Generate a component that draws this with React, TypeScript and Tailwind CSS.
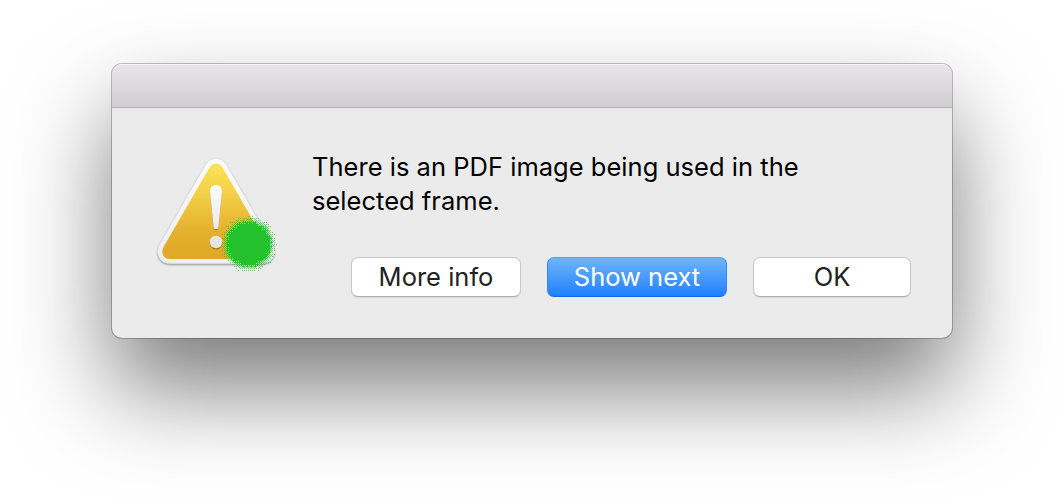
import { clsx } from "clsx";

const bayer = [
  [0, 8, 2, 10],
  [12, 4, 14, 6],
  [3, 11, 1, 9],
  [15, 7, 13, 5],
];

// round spot that breaks up into single pixels towards its rim
function ditheredDot(cx: number, cy: number, solid: number, rim: number) {
  let core = "";
  let edge = "";
  for (let y = Math.floor(cy - rim); y < cy + rim; y++) {
    for (let x = Math.floor(cx - rim); x < cx + rim; x++) {
      const dist = Math.hypot(x + 0.5 - cx, y + 0.5 - cy);
      const level = Math.min(1, Math.max(0, (rim - dist) / (rim - solid)));
      if (Math.pow(level, 1.15) > (bayer[y & 3][x & 3] + 0.5) / 16) {
        if (dist > 23.5) edge += `M${x} ${y}h1v1h-1z`;
        else core += `M${x} ${y}h1v1h-1z`;
      }
    }
  }
  return { core, edge };
}

const dot = ditheredDot(98.8, 94, 19.5, 29);

const triangle =
  "M59.5 17.5C62.5 12.3 69.5 12.3 72.5 17.5L118.5 97C121.5 103 118.5 109 112.5 109H19.5C13.5 109 10.5 103 13.5 97Z";

const mark =
  "M66 35C69.6 35 72.3 37.5 72 41.5L68.4 77C68.2 80 63.8 80 63.6 77L60 41.5C59.7 37.5 62.4 35 66 35Z";

function WarningIcon() {
  return (
    <svg width="132" height="126" viewBox="0 0 132 126" className="shrink-0">
      <defs>
        <linearGradient id="fill" x1="0" y1="13" x2="0" y2="109" gradientUnits="userSpaceOnUse">
          <stop offset="0" stopColor="#fde455" />
          <stop offset="0.3" stopColor="#f3d148" />
          <stop offset="0.7" stopColor="#e5b12f" />
          <stop offset="1" stopColor="#dfa726" />
        </linearGradient>
        <linearGradient id="rim" x1="0" y1="8" x2="0" y2="114" gradientUnits="userSpaceOnUse">
          <stop offset="0" stopColor="#fcfcfc" />
          <stop offset="1" stopColor="#ededed" />
        </linearGradient>
        <linearGradient id="mark" x1="0" y1="35" x2="0" y2="98" gradientUnits="userSpaceOnUse">
          <stop offset="0" stopColor="#fafafa" />
          <stop offset="1" stopColor="#e3e3e3" />
        </linearGradient>
        <filter id="drop" x="-20%" y="-20%" width="140%" height="140%">
          <feDropShadow dx="0" dy="1" stdDeviation="1.2" floodColor="#000" floodOpacity="0.5" />
        </filter>
        <filter id="markDrop" x="-50%" y="-20%" width="200%" height="140%">
          <feDropShadow dx="0" dy="1.2" stdDeviation="0.7" floodColor="#7a5000" floodOpacity="0.65" />
        </filter>
      </defs>
      <g filter="url(#drop)">
        <path d={triangle} fill="url(#rim)" stroke="url(#rim)" strokeWidth="9" strokeLinejoin="round" />
      </g>
      <path d={triangle} fill="url(#fill)" />
      <g filter="url(#markDrop)" fill="url(#mark)">
        <path d={mark} />
        <circle cx="66" cy="92" r="6.2" />
      </g>
      <g fill="#25c02e" shapeRendering="crispEdges">
        <path d={dot.core} />
        <path d={dot.edge} fillOpacity="0.7" />
      </g>
    </svg>
  );
}

const buttons = [
  { label: "More info", width: "w-[170px]", primary: false },
  { label: "Show next", width: "w-[180px]", primary: true },
  { label: "OK", width: "w-[158px]", primary: false },
];

export default function App() {
  return (
    <div className="h-[498px] w-[1064px] overflow-hidden bg-white px-[112px] pt-16 font-['Inter',sans-serif]">
      <div className="h-[274px] w-[840px] overflow-hidden rounded-[10px] bg-[#ebebeb] shadow-[0_0_0_1px_rgba(0,0,0,0.24),0_50px_96px_rgba(0,0,0,0.52)]">
        <div className="h-11 border-b-[1px] border-[#b2b0b2] bg-linear-to-b from-[#e8e6e9] to-[#d0ced1] shadow-[inset_0_1px_0_#f6f5f6]" />
        <div className="flex pl-[38px] pt-[42px]">
          <WarningIcon />
          <div className="ml-[30px] flex flex-col">
            <p className="text-[25.5px] leading-[34px] tracking-[0.02px] text-black">
              There is an PDF image being used in the
              <br />
              selected frame.
            </p>
            <div className="ml-[39px] mt-[39px] flex gap-[26px]">
              {buttons.map((button) => (
                <button
                  key={button.label}
                  className={clsx(
                    "h-10 rounded-[7px] text-[25.5px] leading-[38px]",
                    button.width,
                    button.primary
                      ? "border border-t-[#4da0f5] border-x-[#2f86f5] border-b-[#0f66f0] bg-linear-to-b from-[#6eb4f8] to-[#1a80fe] text-white"
                      : "border border-[#c8c8c8] border-b-[#b0b0b0] bg-white text-[#222222] shadow-[0_1px_1px_rgba(0,0,0,0.08)]",
                  )}
                >
                  {button.label}
                </button>
              ))}
            </div>
          </div>
        </div>
      </div>
    </div>
  );
}
